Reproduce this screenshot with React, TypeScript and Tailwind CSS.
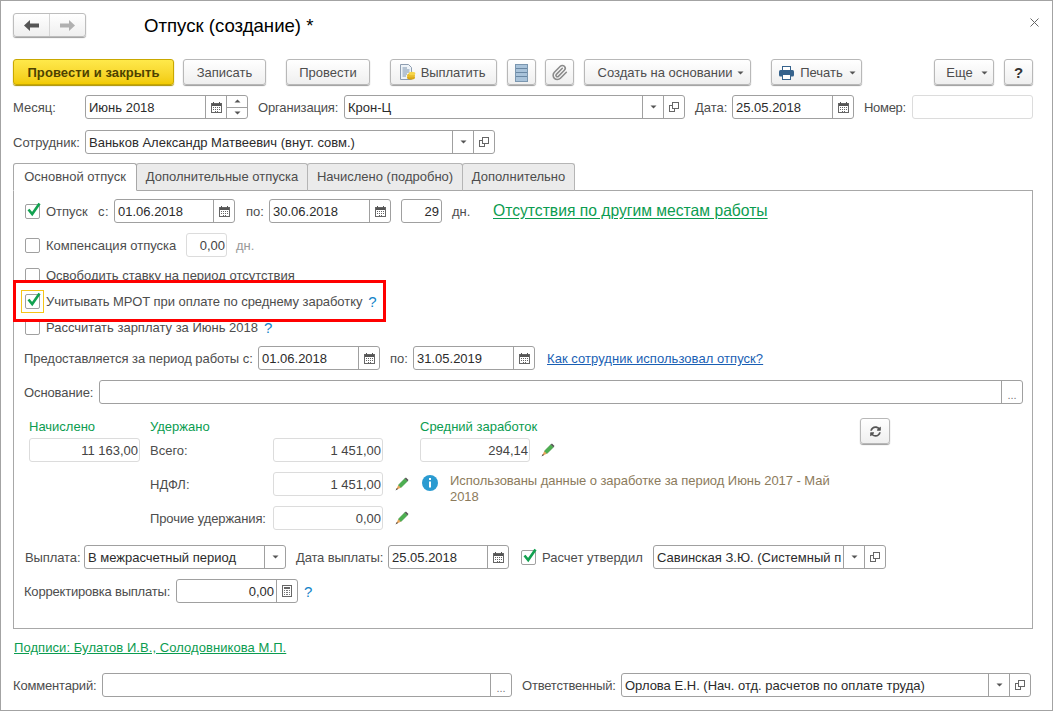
import React from "react";
import { Paperclip } from "lucide-react";
import { FaSyncAlt } from "react-icons/fa";

const Caret = ({ up = false, c = "#555" }: { up?: boolean; c?: string }) => (
  <svg width="7" height="4" viewBox="0 0 7 4" className="shrink-0">
    <path d={up ? "M3.5 0.5L6.5 3.5H0.5Z" : "M0.5 0.5H6.5L3.5 3.5Z"} fill={c} />
  </svg>
);

const Cal = () => (
  <svg width="11" height="11" viewBox="0 0 11 11" shapeRendering="crispEdges">
    <rect x="0.5" y="1.5" width="10" height="9" fill="#fff" stroke="#666" />
    <rect x="1" y="2" width="9" height="2" fill="#555" />
    <rect x="2" y="0" width="1" height="2" fill="#555" />
    <rect x="8" y="0" width="1" height="2" fill="#555" />
    <path d="M2 5h1v1H2zM4 5h1v1H4zM6 5h1v1H6zM8 5h1v1H8zM2 7h1v1H2zM4 7h1v1H4zM6 7h1v1H6zM8 7h1v1H8zM4 9h1v1H4zM6 9h1v1H6z" fill="#666" />
  </svg>
);

const Calc = () => (
  <svg width="10" height="12" viewBox="0 0 10 12" shapeRendering="crispEdges">
    <rect x="0.5" y="0.5" width="9" height="11" fill="#fff" stroke="#666" />
    <rect x="2" y="2" width="6" height="2" fill="#666" />
    <path d="M2 5h1v1H2zM4 5h2v1H4zM7 5h1v1H7zM2 7h1v1H2zM4 7h2v1H4zM7 7h1v1H7zM2 9h1v1H2zM4 9h2v1H4zM7 9h1v1H7z" fill="#777" />
  </svg>
);

const OpenIcon = () => (
  <svg width="10" height="10" viewBox="0 0 10 10" shapeRendering="crispEdges">
    <rect x="3.5" y="0.5" width="6" height="6" fill="#fff" stroke="#666" />
    <path d="M3.5 3.5H0.5V9.5H5.5V6.5" fill="none" stroke="#666" />
  </svg>
);

const Dots = () => <span className="text-[11px] leading-none text-[#777] mt-[6px]">...</span>;

type Part = "cal" | "calc" | "drop" | "open" | "dots" | "spin";

const Seg = ({ p }: { p: Part }) =>
  p === "spin" ? (
    <div className="w-[21px] h-full border-l border-[#a0a0a0] flex flex-col shrink-0">
      <div className="flex-1 flex items-center justify-center border-b border-[#a0a0a0]">
        <Caret up />
      </div>
      <div className="flex-1 flex items-center justify-center">
        <Caret />
      </div>
    </div>
  ) : (
    <div className="w-[21px] h-full border-l border-[#a0a0a0] flex items-center justify-center shrink-0">
      {p === "cal" && <Cal />}
      {p === "calc" && <Calc />}
      {p === "drop" && <Caret />}
      {p === "open" && <OpenIcon />}
      {p === "dots" && <Dots />}
    </div>
  );

function Field({
  className = "",
  value = "",
  right = false,
  muted = false,
  parts = [],
}: {
  className?: string;
  value?: string;
  right?: boolean;
  muted?: boolean;
  parts?: Part[];
}) {
  return (
    <div
      className={`h-6 shrink-0 flex items-stretch rounded-[3px] border bg-white overflow-hidden ${
        muted ? "border-[#dcdcdc]" : "border-[#a0a0a0]"
      } ${className}`}
    >
      <div
        className={`flex-1 min-w-0 flex items-center whitespace-nowrap overflow-hidden pt-[2px] pl-[3px] ${
          right ? "justify-end" : ""
        } ${muted ? "text-[#444] pr-px" : "text-[#2b2b2b] pr-[2px]"}`}
      >
        {value}
      </div>
      {parts.map((p, i) => (
        <Seg key={i} p={p} />
      ))}
    </div>
  );
}

const Label = ({ className = "", children }: { className?: string; children: React.ReactNode }) => (
  <span className={`text-[#4d4d4d] whitespace-nowrap shrink-0 pt-[2px] ${className}`}>{children}</span>
);

function Btn({
  className = "",
  children,
  gold = false,
}: {
  className?: string;
  children: React.ReactNode;
  gold?: boolean;
}) {
  return (
    <div
      className={`h-[26px] shrink-0 flex items-center justify-center rounded-[3px] border whitespace-nowrap bg-linear-to-b pt-px ${
        gold
          ? "border-[#c9a800] from-[#ffe94a] to-[#f2cb00] text-[#4d4200] font-bold tracking-[0.1px] shadow-[0_1px_1px_#a89000]"
          : "border-[#b8b8b8] from-white to-[#efefef] text-[#4d4d4d] shadow-[0_1px_1px_#9c9c9c]"
      } ${className}`}
    >
      {children}
    </div>
  );
}

function Check({ checked = false, focus = false }: { checked?: boolean; focus?: boolean }) {
  return (
    <div className="relative w-[15px] h-[15px] shrink-0">
      <div className="w-[15px] h-[15px] rounded-[2px] border border-[#a0a0a0] bg-white" />
      {focus && <div className="absolute -left-[4px] -top-[4px] w-[23px] h-[23px] border border-[#f5c518]" />}
      {checked && (
        <svg width="16" height="16" viewBox="0 0 16 16" className="absolute left-[1px] -top-[3px]">
          <path d="M2.5 8.5L6.2 13L13.5 2.5" fill="none" stroke="#12a150" strokeWidth="2.6" />
        </svg>
      )}
    </div>
  );
}

const Q = ({ className = "" }: { className?: string }) => (
  <span className={`text-[#1283c8] text-[15px] pt-[2px] shrink-0 ${className}`}>?</span>
);

const Pencil = ({ className = "" }: { className?: string }) => (
  <svg width="14" height="14" viewBox="0 0 14 14" className={`shrink-0 ${className}`}>
    <path d="M3.2 8.2L9.8 1.6L12.4 4.2L5.8 10.8Z" fill="#4caf50" stroke="#3a8a3e" strokeWidth="0.5" />
    <path d="M9.8 1.6L10.9 0.5L13.5 3.1L12.4 4.2Z" fill="#555" />
    <path d="M3.2 8.2L5.8 10.8L1 13Z" fill="#e9a45a" />
    <path d="M1.9 11L3 12.1L0.5 13.5Z" fill="#444" />
  </svg>
);

const Tab = ({ className = "", active = false, children }: { className?: string; active?: boolean; children: React.ReactNode }) => (
  <div
    className={`h-[28px] pb-px flex items-center justify-center rounded-t-[3px] border whitespace-nowrap text-[#4d4d4d] shrink-0 ${
      active ? "bg-white border-[#a8a8a8] border-b-white relative z-10" : "bg-[#ebebeb] border-[#b5b5b5] border-b-[#a8a8a8] -ml-px"
    } ${className}`}
  >
    {children}
  </div>
);

export default function App() {
  return (
    <div className="relative w-[1053px] h-[711px] overflow-hidden bg-white border border-[#a3a3a3] pl-[12px] pt-[12px] font-['Liberation_Sans',Arial,sans-serif] text-[13px] leading-4">
      {/* header */}
      <div className="flex items-center h-6">
        <div className="flex w-[73px] h-6 rounded-[3px] border border-[#bdbdbd] bg-linear-to-b from-white to-[#efefef] shadow-[0_1px_1px_#9c9c9c]">
          <div className="w-9 flex items-center justify-center border-r border-[#d5d5d5]">
            <svg width="15" height="11" viewBox="0 0 15 11">
              <path d="M0 5.5L6 0V3.5H15V7.5H6V11Z" fill="#555" />
            </svg>
          </div>
          <div className="flex-1 flex items-center justify-center">
            <svg width="15" height="11" viewBox="0 0 15 11">
              <path d="M15 5.5L9 0V3.5H0V7.5H9V11Z" fill="#b0b0b0" />
            </svg>
          </div>
        </div>
        <div className="ml-[58px] pt-[2px] text-[18.6px] leading-6 text-black whitespace-nowrap">Отпуск (создание) *</div>
        <div className="flex-1" />
        <svg width="9" height="9" viewBox="0 0 9 9" className="mr-[13px] -mt-[6px]">
          <path d="M0.5 0.5L8.5 8.5M8.5 0.5L0.5 8.5" stroke="#666" strokeWidth="1" />
        </svg>
      </div>

      {/* toolbar */}
      <div className="flex items-center mt-[22px]">
        <Btn gold className="w-[161px]">Провести и закрыть</Btn>
        <Btn className="w-[83px] ml-[9px]">Записать</Btn>
        <Btn className="w-[84px] ml-[20px]">Провести</Btn>
        <Btn className="w-[107px] ml-[20px] gap-[5px] tracking-[-0.1px] pr-[3px]">
          <svg width="17" height="17" viewBox="0 0 17 17">
            <path d="M1.5 0.5H9.5L12.5 3.5V15.5H1.5Z" fill="#eef3f8" stroke="#8d9db0" />
            <path d="M3.5 4H8M3.5 6H10.5M3.5 8H10.5M3.5 10H8M3.5 12H7" stroke="#7b93ad" />
            <ellipse cx="12" cy="13.5" rx="4" ry="2" fill="#d9a514" />
            <ellipse cx="12" cy="11.5" rx="4" ry="2" fill="#e8bc2a" />
            <ellipse cx="13" cy="9.5" rx="3.4" ry="1.8" fill="#f6d54a" />
          </svg>
          Выплатить
        </Btn>
        <Btn className="w-[29px] ml-[10px]">
          <svg width="13" height="18" viewBox="0 0 13 18" shapeRendering="crispEdges">
            <rect x="0.5" y="0.5" width="12" height="17" fill="#a9c3da" stroke="#7b97b0" />
            <path d="M1 4.5H12M1 8.5H12M1 12.5H12" stroke="#6a88a4" />
          </svg>
        </Btn>
        <Btn className="w-[29px] ml-[9px]">
          <Paperclip size={17} color="#8a8a8a" strokeWidth={2.2} />
        </Btn>
        <Btn className="w-[167px] ml-[10px] gap-[5px] pl-[7px]">
          Создать на основании <Caret />
        </Btn>
        <Btn className="w-[91px] ml-[20px] gap-[6px] pl-[2px]">
          <svg width="15" height="14" viewBox="0 0 15 14">
            <rect x="3.5" y="0.5" width="8" height="5" fill="#fff" stroke="#35628c" />
            <rect x="0" y="4" width="15" height="6.5" rx="1.5" fill="#35628c" />
            <rect x="3.5" y="8.5" width="8" height="5" fill="#fff" stroke="#35628c" />
          </svg>
          Печать <Caret />
        </Btn>
        <Btn className="w-[60px] ml-[72px] gap-[8px] pl-[6px]">
          Еще <Caret />
        </Btn>
        <Btn className="w-[29px] ml-[10px] text-[15px] font-bold !text-[#333]">?</Btn>
      </div>

      {/* row 1 */}
      <div className="flex items-center mt-[10px]">
        <Label className="w-[72px]">Месяц:</Label>
        <Field className="w-[163px]" value="Июнь 2018" parts={["cal", "spin"]} />
        <Label className="ml-[10px] w-[86px] tracking-[-0.15px]">Организация:</Label>
        <Field className="w-[341px]" value="Крон-Ц" parts={["drop", "open"]} />
        <Label className="ml-[10px] w-[37px]">Дата:</Label>
        <Field className="w-[122px]" value="25.05.2018" parts={["cal"]} />
        <Label className="ml-[10px] w-[48px] tracking-[-0.3px]">Номер:</Label>
        <Field className="w-[121px]" muted />
      </div>

      {/* row 2 */}
      <div className="flex items-center mt-[11px]">
        <Label className="w-[72px]">Сотрудник:</Label>
        <Field className="w-[410px]" value="Ваньков Александр Матвеевич (внут. совм.)" parts={["drop", "open"]} />
      </div>

      {/* tabs */}
      <div className="flex items-start mt-[9px] h-[27px]">
        <Tab active className="w-[124px]">Основной отпуск</Tab>
        <Tab className="w-[172px]">Дополнительные отпуска</Tab>
        <Tab className="w-[156px]">Начислено (подробно)</Tab>
        <Tab className="w-[113px]">Дополнительно</Tab>
      </div>

      {/* panel */}
      <div className="w-[1020px] h-[439px] border border-[#a8a8a8] pl-[10px]">
        <div className="flex items-center mt-[8px] h-6 pl-px">
          <Check checked />
          <Label className="ml-[6px] w-[52px]">Отпуск</Label>
          <Label className="w-[16px] tracking-[0.5px]">с:</Label>
          <Field className="w-[121px]" value="01.06.2018" parts={["cal"]} />
          <Label className="ml-[11px] w-[23px]">по:</Label>
          <Field className="w-[122px]" value="30.06.2018" parts={["cal"]} />
          <Field className="w-[41px] ml-[10px]" value="29" right />
          <Label className="ml-[10px] w-[41px]">дн.</Label>
          <span className="text-[15.66px] leading-5 text-[#0b9c50] underline underline-offset-2 whitespace-nowrap">Отсутствия по другим местам работы</span>
        </div>

        <div className="flex items-center mt-[10px] h-6 pl-px">
          <Check />
          <Label className="ml-[6px] w-[140px]">Компенсация отпуска</Label>
          <Field className="w-[41px]" value="0,00" right muted />
          <Label className="ml-[9px] !text-[#999]">дн.</Label>
        </div>

        <div className="flex items-center mt-[6px] h-6 pl-px">
          <Check />
          <Label className="ml-[6px]">Освободить ставку на период отсутствия</Label>
        </div>

        <div className="flex items-center mt-[2px] h-6 pl-px">
          <Check checked focus />
          <Label className="ml-[6px] tracking-[-0.06px]">Учитывать МРОТ при оплате по среднему заработку</Label>
          <Q className="ml-[6px]" />
        </div>

        <div className="flex items-center mt-[2px] h-6 pl-px">
          <Check />
          <Label className="ml-[6px]">Рассчитать зарплату за Июнь 2018</Label>
          <Q className="ml-[6px]" />
        </div>

        <div className="flex items-center mt-[7px] h-6">
          <Label className="w-[234px] tracking-[-0.05px]">Предоставляется за период работы с:</Label>
          <Field className="w-[122px]" value="01.06.2018" parts={["cal"]} />
          <Label className="ml-[10px] w-[23px]">по:</Label>
          <Field className="w-[122px]" value="31.05.2019" parts={["cal"]} />
          <span className="ml-[12px] pt-[2px] text-[#1a5fb4] underline tracking-[0.06px] whitespace-nowrap">Как сотрудник использовал отпуск?</span>
        </div>

        <div className="flex items-center mt-[10px] h-6">
          <Label className="w-[75px] tracking-[-0.1px]">Основание:</Label>
          <Field className="w-[924px]" parts={["dots"]} />
        </div>

        {/* amounts */}
        <div className="flex items-start mt-[14px]">
          <div className="flex flex-col w-[111px] ml-[5px]">
            <span className="text-[#0b9c50] pt-px">Начислено</span>
            <Field className="w-[111px] mt-[3px]" value="11 163,00" right muted />
          </div>
          <div className="flex flex-col ml-[10px] w-[270px]">
            <span className="text-[#0b9c50] pt-px">Удержано</span>
            <div className="flex items-center mt-[3px]">
              <Label className="w-[123px]">Всего:</Label>
              <Field className="w-[110px]" value="1 451,00" right muted />
            </div>
            <div className="flex items-center mt-[10px]">
              <Label className="w-[123px]">НДФЛ:</Label>
              <Field className="w-[110px]" value="1 451,00" right muted />
              <Pencil className="ml-[12px]" />
            </div>
            <div className="flex items-center mt-[10px]">
              <Label className="w-[123px] tracking-[-0.1px]">Прочие удержания:</Label>
              <Field className="w-[110px]" value="0,00" right muted />
              <Pencil className="ml-[12px]" />
            </div>
          </div>
          <div className="flex flex-col w-[430px]">
            <span className="text-[#0b9c50] pt-px">Средний заработок</span>
            <div className="flex items-center mt-[3px]">
              <Field className="w-[110px]" value="294,14" right muted />
              <Pencil className="ml-[11px]" />
            </div>
            <div className="flex items-start mt-[10px]">
              <svg width="16" height="16" viewBox="0 0 16 16" className="ml-[2px] mt-[3px] shrink-0">
                <circle cx="8" cy="8" r="8" fill="#2b9bd1" />
                <rect x="7" y="3" width="2" height="2" fill="#fff" />
                <rect x="7" y="6.5" width="2" height="6" fill="#fff" />
              </svg>
              <div className="ml-[12px] w-[384px] pt-px tracking-[-0.05px] text-[#8c7b5c]">Использованы данные о заработке за период Июнь 2017 - Май 2018</div>
            </div>
          </div>
          <Btn className="w-[30px] ml-[10px]">
            <FaSyncAlt size={11} color="#555" />
          </Btn>
        </div>

        <div className="flex items-center mt-[15px] h-6">
          <Label className="w-[60px] tracking-[-0.1px] pl-px">Выплата:</Label>
          <Field className="w-[202px]" value="В межрасчетный период" parts={["drop"]} />
          <Label className="ml-[10px] w-[92px] tracking-[-0.15px]">Дата выплаты:</Label>
          <Field className="w-[121px]" value="25.05.2018" parts={["cal"]} />
          <div className="ml-[12px]">
            <Check checked />
          </div>
          <Label className="ml-[6px] w-[111px]">Расчет утвердил</Label>
          <Field className="w-[233px]" value="Савинская З.Ю. (Системный п" parts={["drop", "open"]} />
        </div>

        <div className="flex items-center mt-[10px] h-6">
          <Label className="w-[152px] tracking-[-0.2px]">Корректировка выплаты:</Label>
          <Field className="w-[122px]" value="0,00" right parts={["calc"]} />
          <Q className="ml-[6px]" />
        </div>
      </div>

      {/* signatures */}
      <div className="mt-[10px] h-4 pl-px pt-px">
        <span className="text-[#0b9c50] underline tracking-[0.07px] whitespace-nowrap">Подписи: Булатов И.В., Солодовникова М.П.</span>
      </div>

      {/* bottom */}
      <div className="flex items-center mt-[18px]">
        <Label className="w-[89px] tracking-[-0.17px]">Комментарий:</Label>
        <Field className="w-[410px]" parts={["dots"]} />
        <Label className="ml-[10px] w-[99px] tracking-[-0.2px]">Ответственный:</Label>
        <Field className="w-[410px]" value="Орлова Е.Н. (Нач. отд. расчетов по оплате труда)" parts={["drop", "open"]} />
      </div>

      {/* callout */}
      <div className="absolute left-[12px] top-[279px] w-[373px] h-[42px] border-[3px] border-[#ff0000] pointer-events-none z-20" />
    </div>
  );
}
